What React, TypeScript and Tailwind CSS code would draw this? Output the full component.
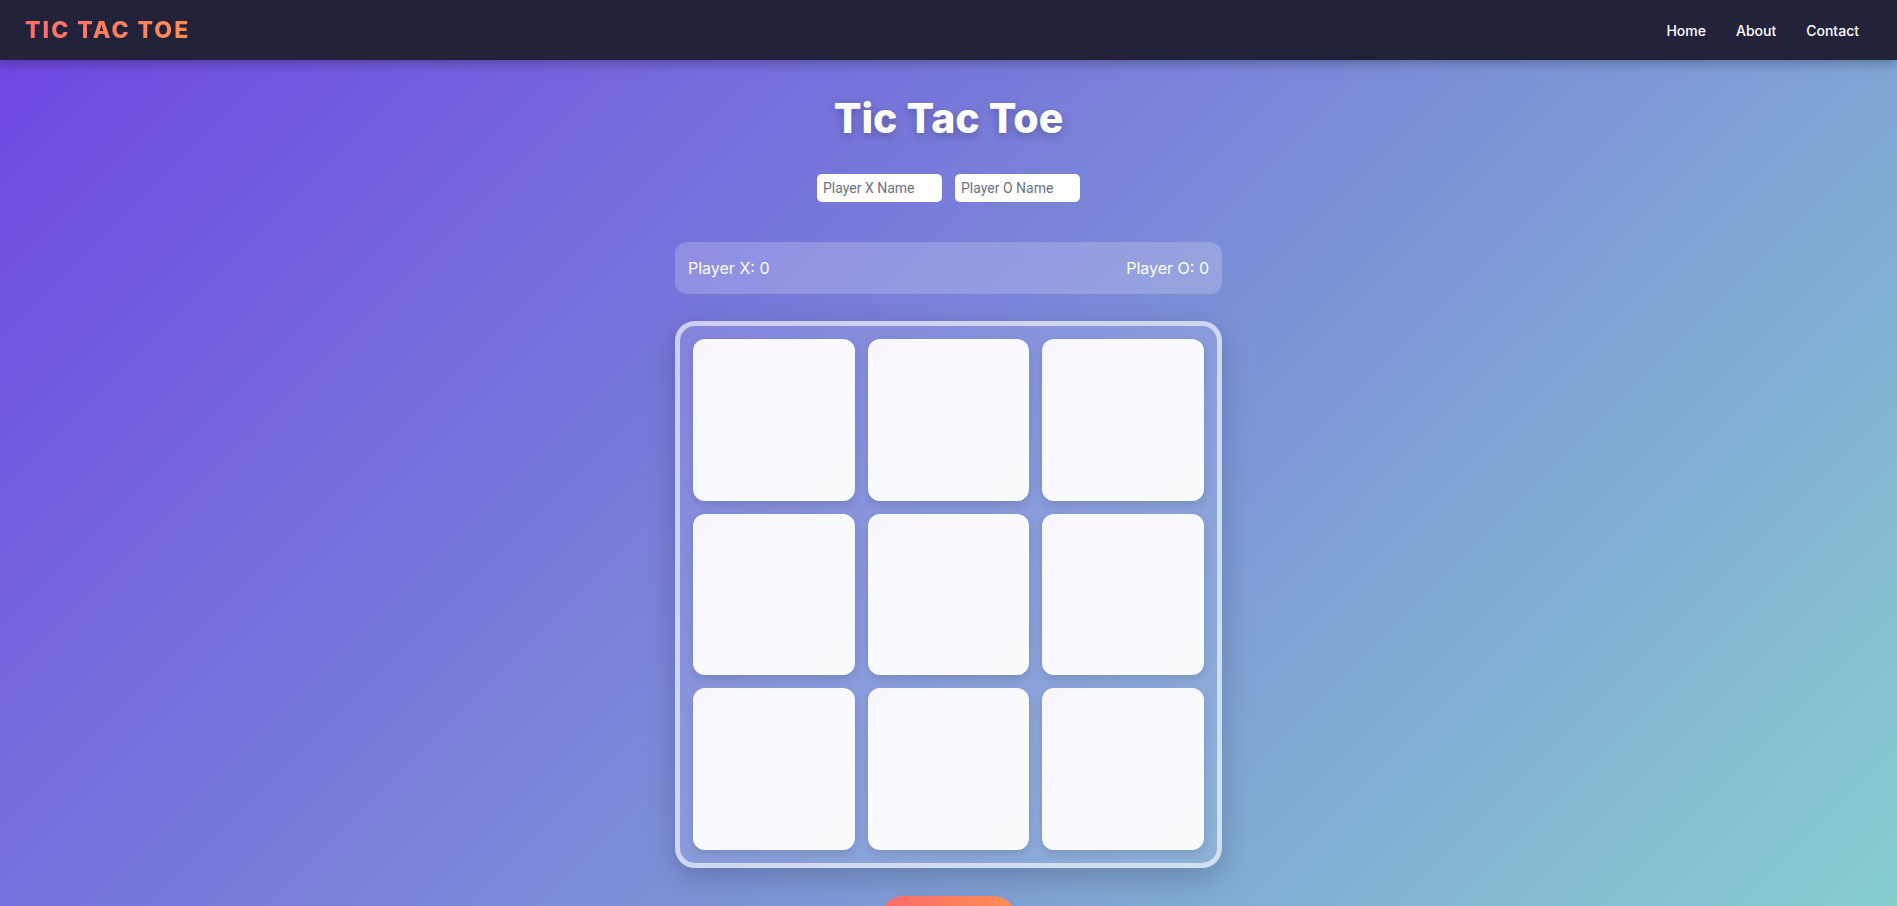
import { useState } from "react";

const font = { fontFamily: "Inter, 'Noto Sans', sans-serif" };

export default function App() {
    const [board, setBoard] = useState<(string | null)[]>(Array(9).fill(null));
    const [xName, setXName] = useState("");
    const [oName, setOName] = useState("");
    const [turn, setTurn] = useState("X");

    const play = (i: number) => {
        if (board[i]) return;
        const next = board.slice();
        next[i] = turn;
        setBoard(next);
        setTurn(turn === "X" ? "O" : "X");
    };

    return (
        <div style={font} className="min-h-screen bg-[linear-gradient(135deg,#6e45e2_0%,#88d3ce_100%)] pb-16">
            <header className="h-[60px] bg-[#22223a] flex items-center justify-between pl-[25px] pr-[38px] shadow-[0_4px_10px_rgba(0,0,0,0.25)] relative">
                <span className="text-[23px] font-extrabold tracking-[2px] bg-[linear-gradient(90deg,#ff6b6b,#ff8e53)] bg-clip-text text-transparent">
                    TIC TAC TOE
                </span>
                <nav className="flex items-center gap-[30px] text-[14px] font-medium text-white">
                    <a href="#">Home</a>
                    <a href="#">About</a>
                    <a href="#">Contact</a>
                </nav>
            </header>

            <main className="flex flex-col items-center pt-[30px]">
                <h1 className="text-[41px] leading-[56px] font-extrabold text-white [text-shadow:0_3px_10px_rgba(0,0,0,0.25)]">
                    Tic Tac Toe
                </h1>

                <div className="flex gap-[13px] mt-[28px]">
                    <input
                        value={xName}
                        onChange={(e) => setXName(e.target.value)}
                        placeholder="Player X Name"
                        style={{ fontFamily: "Roboto, sans-serif" }}
                        className="w-[125px] h-[28px] rounded-[5px] bg-white px-[6px] text-[14px] text-gray-800 placeholder:text-gray-500 outline-none"
                    />
                    <input
                        value={oName}
                        onChange={(e) => setOName(e.target.value)}
                        placeholder="Player O Name"
                        style={{ fontFamily: "Roboto, sans-serif" }}
                        className="w-[125px] h-[28px] rounded-[5px] bg-white px-[6px] text-[14px] text-gray-800 placeholder:text-gray-500 outline-none"
                    />
                </div>

                <div className="mt-[40px] w-[547px] h-[52px] rounded-[12px] bg-white/20 flex items-center justify-between px-[13px] text-[16px] text-white">
                    <span>{xName || "Player X"}: 0</span>
                    <span>{oName || "Player O"}: 0</span>
                </div>

                <div className="mt-[27px] w-[547px] h-[547px] rounded-[20px] border-[5px] border-white/60 bg-white/10 p-[13px] grid grid-cols-3 grid-rows-3 gap-[13px] shadow-[0_10px_30px_rgba(0,0,0,0.2)]">
                    {board.map((v, i) => (
                        <button
                            key={i}
                            onClick={() => play(i)}
                            className="rounded-[12px] bg-[linear-gradient(135deg,#f7f7fd_0%,#f9fafd_50%,#f8fafc_100%)] shadow-[0_4px_10px_rgba(0,0,0,0.12)] text-[64px] font-extrabold text-[#6e45e2]"
                        >
                            {v}
                        </button>
                    ))}
                </div>

                <button className="mt-[28px] w-[137px] h-[48px] rounded-full bg-[linear-gradient(90deg,#ff6b6b,#ff8e53)] text-white font-semibold text-[16px] shadow-[0_4px_10px_rgba(0,0,0,0.15)]">
                    Restart
                </button>
            </main>
        </div>
    );
}
